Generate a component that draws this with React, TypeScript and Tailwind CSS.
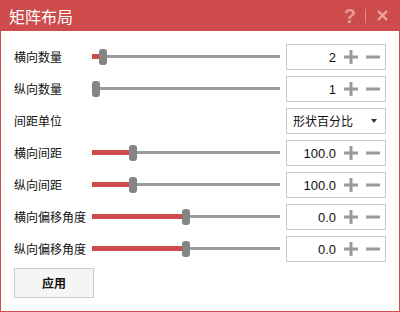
import React from "react";

const RED = "#cd4b4b";

function Slider({ pos }: { pos: number }) {
  return (
    <div className="relative w-[188px] h-[16px]">
      <div className="absolute left-0 right-0 top-[6px] h-[3px] bg-[#9b9b9b]" />
      {pos > 0 && (
        <div
          className="absolute left-0 top-[5px] h-[5px] bg-[#cd4b4b]"
          style={{ width: pos }}
        />
      )}
      <div
        className="absolute top-0 w-[8px] h-[16px] rounded-[3px] bg-[#858585]"
        style={{ left: pos }}
      />
    </div>
  );
}

function Plus() {
  return (
    <svg width="14" height="14" viewBox="0 0 14 14" className="block">
      <rect x="0" y="5.5" width="14" height="3" fill="#9a9a9a" />
      <rect x="5.5" y="0" width="3" height="14" fill="#9a9a9a" />
    </svg>
  );
}

function Minus() {
  return (
    <svg width="14" height="14" viewBox="0 0 14 14" className="block">
      <rect x="0" y="5.5" width="14" height="3" fill="#9a9a9a" />
    </svg>
  );
}

function NumBox({ value }: { value: string }) {
  return (
    <div className="w-[100px] h-[26px] border border-[#c8c8c8] bg-white flex items-center justify-end pr-[5px]">
      <span className="text-[13px] text-[#111] leading-none font-['Liberation_Sans',sans-serif]">
        {value}
      </span>
      <span className="ml-[8px]">
        <Plus />
      </span>
      <span className="ml-[8px]">
        <Minus />
      </span>
    </div>
  );
}

function Row({
  label,
  children,
}: {
  label: string;
  children: React.ReactNode;
}) {
  return (
    <div className="h-[32px] flex items-center">
      <div className="w-[78px] text-[12px] text-[#111] whitespace-nowrap">
        {label}
      </div>
      {children}
    </div>
  );
}

function SliderRow({
  label,
  pos,
  value,
}: {
  label: string;
  pos: number;
  value: string;
}) {
  return (
    <Row label={label}>
      <Slider pos={pos} />
      <div className="ml-[6px]">
        <NumBox value={value} />
      </div>
    </Row>
  );
}

export default function App() {
  return (
    <div className="w-[400px] h-[312px] bg-white flex flex-col font-['Noto_Sans_CJK_SC','Noto_Sans',sans-serif]">
      <div className="h-[31px] bg-[#cd4b4b] flex items-center pl-[9px] pr-[12px] shrink-0">
        <span className="text-white text-[16px] leading-none">矩阵布局</span>
        <div className="flex-1" />
        <span className="text-[#e69a9a] text-[20px] font-bold leading-none font-['Liberation_Sans',sans-serif] mr-[9px]">
          ?
        </span>
        <div className="w-px h-[14px] bg-[#e08a8a] mr-[11px]" />
        <svg width="11" height="11" viewBox="0 0 11 11" className="block">
          <line x1="1" y1="1" x2="10" y2="10" stroke="#eaa2a2" strokeWidth="2.4" />
          <line x1="10" y1="1" x2="1" y2="10" stroke="#eaa2a2" strokeWidth="2.4" />
        </svg>
      </div>
      <div
        className="flex-1 border-l border-r border-b border-[#cd4b4b] pl-[13px] pr-[13px] pt-[10px] flex flex-col"
        style={{ borderColor: RED }}
      >
        <SliderRow label="横向数量" pos={7} value="2" />
        <SliderRow label="纵向数量" pos={0} value="1" />
        <Row label="间距单位">
          <div className="ml-[194px] w-[100px] h-[26px] border border-[#c8c8c8] bg-white flex items-center pl-[6px] pr-[8px]">
            <span className="text-[12px] text-[#111] leading-none">形状百分比</span>
            <div className="flex-1" />
            <svg width="6" height="4" viewBox="0 0 6 4" className="block">
              <polygon points="0,0 6,0 3,4" fill="#333" />
            </svg>
          </div>
        </Row>
        <SliderRow label="横向间距" pos={37} value="100.0" />
        <SliderRow label="纵向间距" pos={37} value="100.0" />
        <SliderRow label="横向偏移角度" pos={90} value="0.0" />
        <SliderRow label="纵向偏移角度" pos={90} value="0.0" />
        <div className="mt-[3px] w-[80px] h-[30px] border border-[#cacaca] bg-[#f5f5f5] flex items-center justify-center">
          <span className="text-[12px] font-bold text-[#111] leading-none">应用</span>
        </div>
      </div>
    </div>
  );
}
